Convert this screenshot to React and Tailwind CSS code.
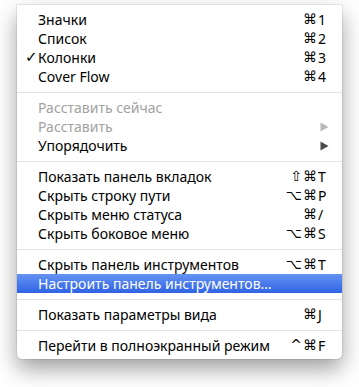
import React from "react";

const Arrow = ({ disabled }) => (
  <svg width="9" height="10" viewBox="0 0 9 10" className="block">
    <polygon points="0.5,0.5 8.5,5 0.5,9.5" fill={disabled ? "#b9b9b9" : "#4b4b4b"} />
  </svg>
);

const Shortcut = ({ mods, k, light }) => (
  <span
    className={"flex items-center " + (light ? "text-white" : "text-black")}
    style={{ fontFamily: '"DejaVu Sans", sans-serif' }}
  >
    <span className="tracking-[1px]">{mods}</span>
    <span className="w-[11px] text-left" style={{ fontFamily: '"Noto Sans", "DejaVu Sans", sans-serif' }}>
      {k}
    </span>
  </span>
);

const Item = ({ label, checked, disabled, selected, mods, k, arrow }) => (
  <div
    className={
      "flex h-[19px] items-center justify-between pl-[8px] pr-[13px] leading-[19px] " +
      (selected
        ? "bg-gradient-to-b from-[#6592f2] to-[#2f63e4] text-white"
        : disabled
        ? "text-[#a2a2a2]"
        : "text-black")
    }
  >
    <span className="flex items-center">
      <span className="w-[13px] text-[15px]" style={{ fontFamily: '"DejaVu Sans", sans-serif' }}>
        {checked ? "✓" : ""}
      </span>
      <span>{label}</span>
    </span>
    {arrow ? (
      <span>
        <Arrow disabled={disabled} />
      </span>
    ) : k ? (
      <Shortcut mods={mods} k={k} light={selected} />
    ) : null}
  </div>
);

const Sep = () => (
  <div className="flex h-[12px] items-center">
    <div className="h-px w-full bg-[#e4e4e4]" />
  </div>
);

export default function App() {
  return (
    <div className="min-h-[387px] w-[359px] bg-white pl-[17px] pt-[5px]">
      <div
        className="w-[325px] rounded-b-[5px] bg-white pb-[4px] pt-[5px] text-[14px] shadow-[0_0_0_1px_rgba(0,0,0,0.07),0_10px_22px_rgba(0,0,0,0.38)]"
        style={{ fontFamily: '"Lucida Grande", "Noto Sans", "DejaVu Sans", sans-serif' }}
      >
        <Item label="Значки" mods="⌘" k="1" />
        <Item label="Список" mods="⌘" k="2" />
        <Item label="Колонки" checked mods="⌘" k="3" />
        <Item label="Cover Flow" mods="⌘" k="4" />
        <Sep />
        <Item label="Расставить сейчас" disabled />
        <Item label="Расставить" disabled arrow />
        <Item label="Упорядочить" arrow />
        <Sep />
        <Item label="Показать панель вкладок" mods="⇧⌘" k="T" />
        <Item label="Скрыть строку пути" mods="⌥⌘" k="P" />
        <Item label="Скрыть меню статуса" mods="⌘" k="/" />
        <Item label="Скрыть боковое меню" mods="⌥⌘" k="S" />
        <Sep />
        <Item label="Скрыть панель инструментов" mods="⌥⌘" k="T" />
        <Item label="Настроить панель инструментов…" selected />
        <Sep />
        <Item label="Показать параметры вида" mods="⌘" k="J" />
        <Sep />
        <Item label="Перейти в полноэкранный режим" mods="^⌘" k="F" />
      </div>
    </div>
  );
}
